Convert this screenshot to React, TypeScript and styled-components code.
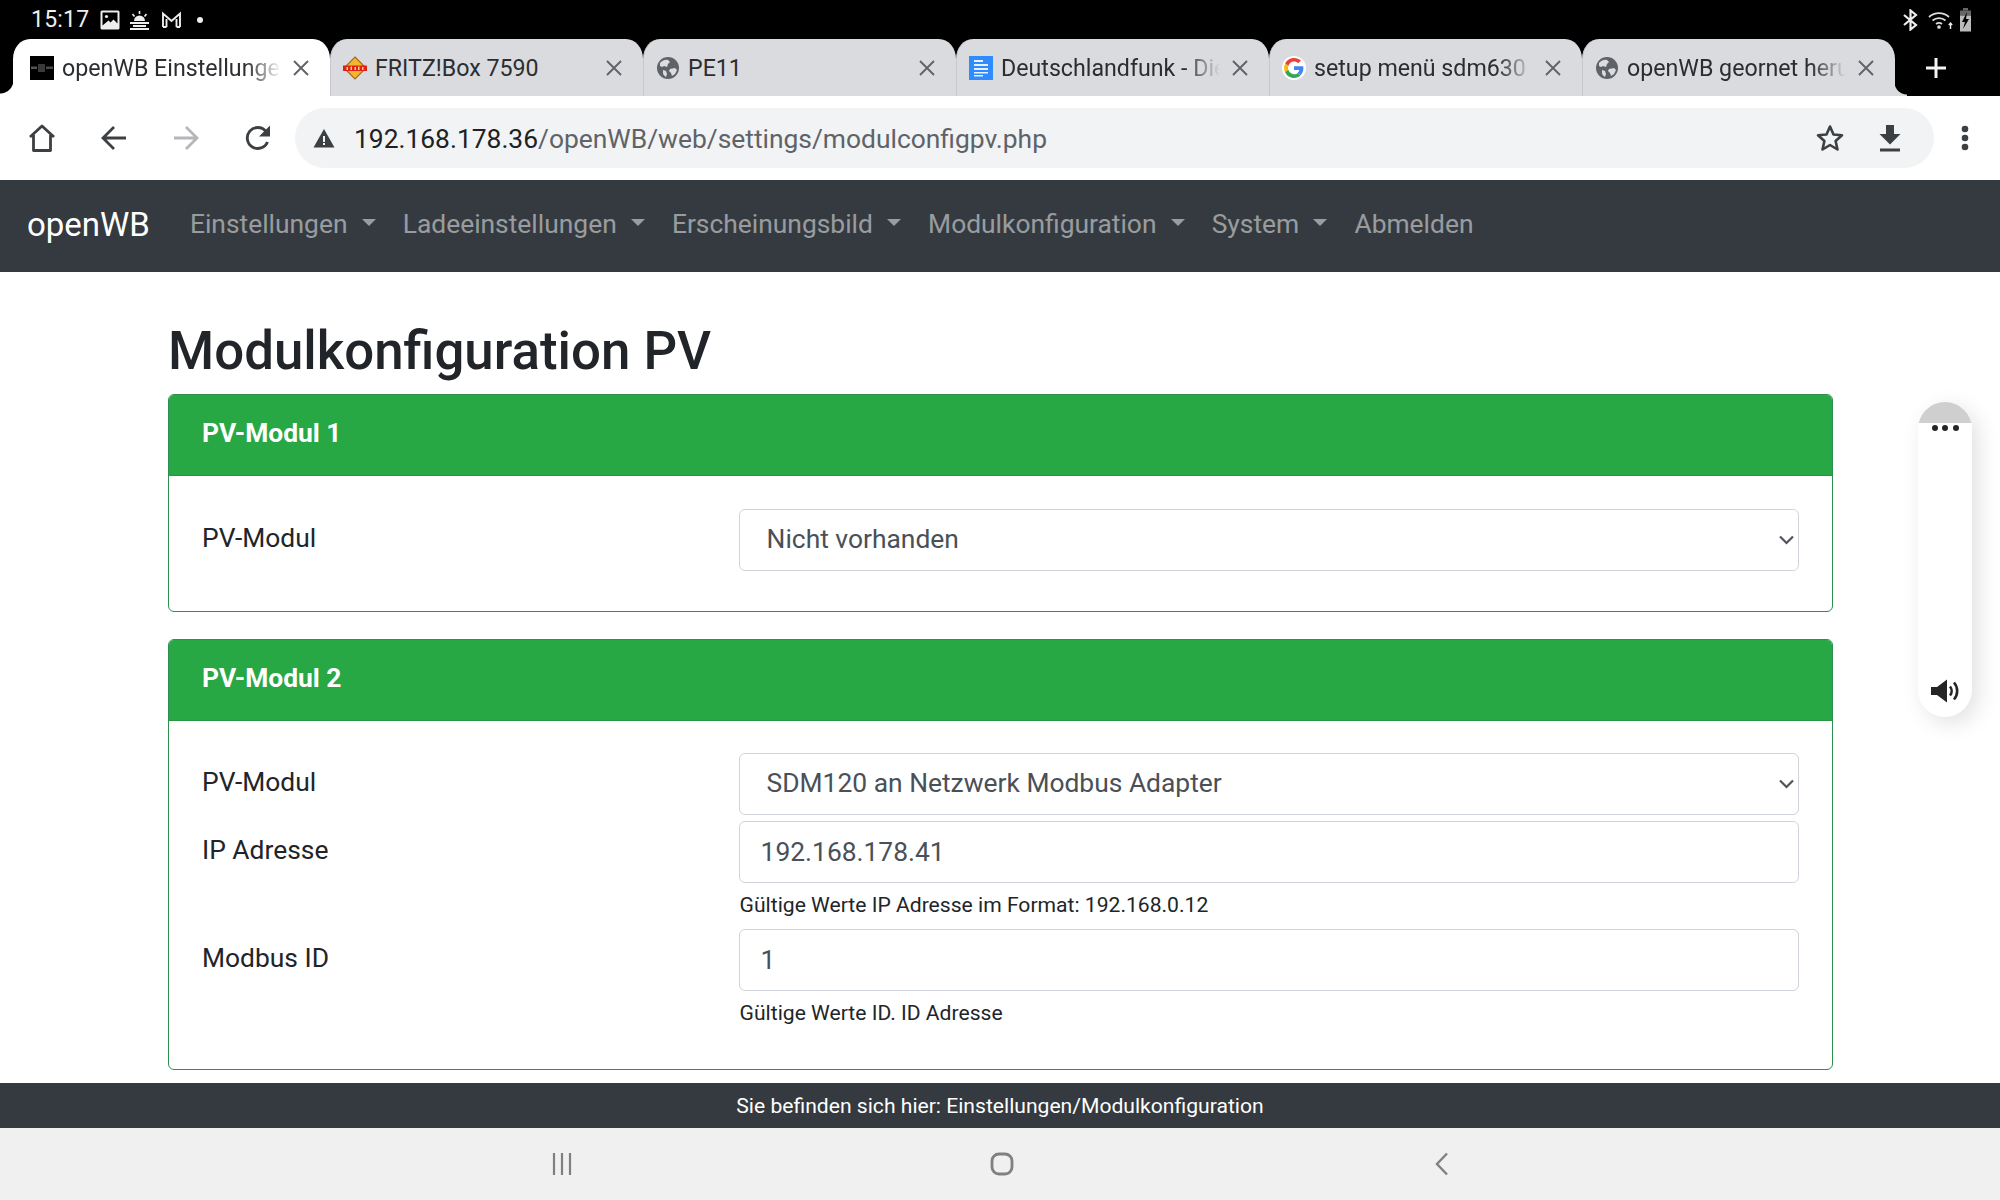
import React from "react";
import styled, { createGlobalStyle } from "styled-components";

const Global = createGlobalStyle`
  html, body { margin: 0; padding: 0; background: #fff; }
  body { font-family: Roboto, "Liberation Sans", sans-serif; color: #212529; }
  * { box-sizing: border-box; }
`;

const Page = styled.div`
  position: relative;
  width: 2000px;
  height: 1200px;
  overflow: hidden;
  display: flex;
  flex-direction: column;
  background: #fff;
`;

const StatusBar = styled.div`
  height: 39px;
  background: #000;
  color: #eee;
  display: flex;
  align-items: center;
  justify-content: space-between;
  padding: 0 28px 0 31px;
`;
const StatusGroup = styled.div<{ $gap: number }>`
  display: flex;
  align-items: center;
  gap: ${(p) => p.$gap}px;
`;
const Clock = styled.span`
  font-size: 23px;
  letter-spacing: 0.2px;
  margin-right: 2px;
`;

const TabStrip = styled.div`
  height: 57px;
  background: #000;
  display: flex;
  padding-left: 17px;
  align-items: stretch;
`;
const Tab = styled.div<{ $active?: boolean }>`
  position: relative;
  width: ${(p) => (p.$active ? 317 : 313)}px;
  height: 57px;
  margin-left: ${(p) => (p.$active ? -4 : 0)}px;
  display: flex;
  align-items: center;
  padding-left: ${(p) => (p.$active ? 17 : 12)}px;
  background: ${(p) => (p.$active ? "#fff" : "#dadbdf")};
  border-radius: 17px 17px 0 0 / 20px 20px 0 0;
  border-left: ${(p) => (p.$active ? "none" : "1px solid #c7c8cc")};
  &::before {
    content: ${(p) => (p.$active ? '""' : "none")};
    position: absolute;
    left: -13px;
    bottom: 0;
    width: 13px;
    height: 16px;
    background: radial-gradient(circle at 0 0, #000 13px, #fff 14px);
  }
`;
const LastFlare = styled.span`
  position: absolute;
  right: -12px;
  bottom: 0;
  width: 12px;
  height: 14px;
  background: radial-gradient(circle at 100% 0, #000 12px, #dadbdf 13px);
`;
const Favicon = styled.span`
  width: 24px;
  height: 24px;
  flex: none;
  display: flex;
  margin-right: 8px;
`;
const TabLabel = styled.span<{ $fade?: boolean }>`
  width: 219px;
  flex: none;
  font-size: 23.2px;
  color: #2c2d30;
  white-space: nowrap;
  overflow: hidden;
  ${(p) =>
    p.$fade
      ? `-webkit-mask-image: linear-gradient(to right, #000 84%, transparent 100%);
         mask-image: linear-gradient(to right, #000 84%, transparent 100%);`
      : ""}
`;
const CloseIcon = styled.svg`
  width: 18px;
  height: 18px;
  margin-left: 11px;
  stroke: #5f6368;
  stroke-width: 1.9;
  fill: none;
`;
const PlusButton = styled.div`
  width: 82px;
  display: flex;
  align-items: center;
  justify-content: center;
`;

const Toolbar = styled.div`
  height: 84px;
  display: flex;
  align-items: center;
  padding-left: 6px;
  background: #fff;
`;
const ToolButton = styled.div<{ $w?: number; $pr?: number }>`
  width: ${(p) => p.$w ?? 72}px;
  height: 60px;
  flex: none;
  display: flex;
  align-items: center;
  justify-content: center;
  padding-right: ${(p) => p.$pr ?? 0}px;
`;
const UrlPill = styled.div`
  flex: 1;
  height: 60px;
  margin-left: 1px;
  background: #f1f3f4;
  border-radius: 30px;
  display: flex;
  align-items: center;
  padding-left: 18px;
`;
const UrlText = styled.div`
  flex: 1;
  margin-left: 19px;
  padding-top: 2px;
  font-size: 26.4px;
  color: #5f6368;
  white-space: nowrap;
`;
const UrlHost = styled.span`
  color: #202124;
`;

const NavBar = styled.nav`
  height: 92px;
  background: #343a40;
  display: flex;
  align-items: center;
  padding: 0 25.6px 4px 27px;
`;
const Brand = styled.span`
  font-size: 33px;
  color: #fff;
  margin-right: 26.4px;
`;
const NavLink = styled.span<{ $caret?: boolean }>`
  font-size: 26.4px;
  color: rgba(255, 255, 255, 0.5);
  padding: 0 13.6px;
  white-space: nowrap;
  &::after {
    content: ${(p) => (p.$caret ? '""' : "none")};
    display: inline-block;
    margin-left: 14px;
    vertical-align: 0.255em;
    border-top: 7.5px solid;
    border-right: 7.5px solid transparent;
    border-left: 7.5px solid transparent;
  }
`;

const Main = styled.main`
  flex: 1;
  min-height: 0;
  overflow: hidden;
  padding: 0 167px 0 168px;
`;
const Title = styled.h1`
  margin: 0;
  height: 122px;
  padding-top: 45px;
  font-size: 52.8px;
  line-height: 68px;
  font-weight: 500;
  color: #212529;
`;
const Card = styled.section`
  border: 1.6px solid #2f8f4e;
  border-radius: 6px;
  overflow: hidden;
  margin-bottom: 27px;
`;
const CardHeader = styled.header`
  height: 81px;
  background: #28a745;
  border-bottom: 1.6px solid #24963e;
  color: #fff;
  font-weight: 700;
  font-size: 26.4px;
  display: flex;
  align-items: center;
  padding-left: 33px;
  padding-bottom: 4px;
`;
const CardBody = styled.div<{ $top: number; $bottom: number }>`
  padding: ${(p) => p.$top}px 33px ${(p) => p.$bottom}px;
`;
const FormRow = styled.div`
  display: grid;
  grid-template-columns: 520.6px 1fr;
  column-gap: 16px;
  margin-bottom: 6px;
`;
const Label = styled.label`
  font-size: 26.4px;
  line-height: 38px;
  padding-top: 10px;
  color: #212529;
`;
const SelectWrap = styled.div`
  position: relative;
`;
const Select = styled.select`
  display: block;
  width: 100%;
  height: 62px;
  appearance: none;
  -webkit-appearance: none;
  background: #fff;
  border: 1.6px solid #ced4da;
  border-radius: 6px;
  padding: 0 40px 2px 27px;
  font: 400 26.4px Roboto, sans-serif;
  color: #495057;
`;
const Chevron = styled.svg`
  position: absolute;
  right: 5px;
  top: 26px;
  width: 15px;
  height: 10px;
  fill: none;
  stroke: #50545a;
  stroke-width: 2.2;
`;
const Input = styled.input`
  display: block;
  width: 100%;
  height: 62px;
  background: #fff;
  border: 1.6px solid #ced4da;
  border-radius: 6px;
  padding: 0 21px;
  font: 400 26.4px Roboto, sans-serif;
  color: #495057;
  outline: none;
`;
const Help = styled.small`
  display: block;
  font-size: 21.12px;
  line-height: 33px;
  margin: 5px 0 2px 1px;
  color: #212529;
`;

const Footer = styled.footer`
  height: 45px;
  background: #343a40;
  color: #fff;
  font-size: 21.12px;
  display: flex;
  align-items: center;
  justify-content: center;
`;
const SystemNav = styled.div`
  height: 72px;
  background: #f0f0f0;
  display: grid;
  grid-template-columns: 440px 440px 440px;
  justify-content: center;
  justify-items: center;
  align-items: center;
  padding: 0 0 0 4px;
`;

const VolumePanel = styled.aside`
  position: absolute;
  left: 1918px;
  top: 402px;
  width: 54px;
  height: 315px;
  border-radius: 27px;
  background: #fff;
  overflow: hidden;
  box-shadow: 6px 6px 22px rgba(0, 0, 0, 0.12);
  display: flex;
  flex-direction: column;
  align-items: center;
  justify-content: space-between;
  padding-bottom: 14px;
`;
const VolumeHandle = styled.div`
  width: 100%;
  height: 29px;
  flex: none;
  background: linear-gradient(#cfcfcf 0 21px, #fff 21px);
  display: flex;
  align-items: flex-end;
  justify-content: center;
  gap: 4.5px;
`;
const VolumeDot = styled.span`
  width: 6px;
  height: 6px;
  border-radius: 50%;
  background: #252525;
`;

const Close = () => (
  <CloseIcon viewBox="0 0 18 18">
    <path d="M2 2 16 16M16 2 2 16" />
  </CloseIcon>
);

const Globe = () => (
  <svg width="24" height="24" viewBox="0 0 24 24">
    <circle cx="12" cy="12" r="11" fill="#5f6368" />
    <path d="M4 7c2-2 5-4 8-3l2 2-2 2-1 3-3-1-2 1-2-1zM14 13l5-1 2 2-2 4-3 2-1-3-2-2zM7 14l3 1 1 3-1 3c-2-1-3-3-3-4z" fill="#dcdde0" />
  </svg>
);

const WbIcon = () => (
  <svg width="24" height="24" viewBox="0 0 24 24">
    <rect width="24" height="24" fill="#000" />
    <rect x="1" y="10.500" width="6" height="2.500" fill="#555" />
    <rect x="8" y="8" width="7" height="8" fill="#3a3a3a" />
    <rect x="16" y="10.500" width="7" height="2.500" fill="#4a4a4a" />
  </svg>
);

const FritzIcon = () => (
  <svg width="24" height="24" viewBox="0 0 24 24">
    <path d="M12 1 23 12 12 23 1 12z" fill="#f2b630" stroke="#a9671a" strokeWidth="1.200" />
    <path d="M0 9.500h24v5.500H0z" fill="#e0201a" />
    <path d="M3.500 11h1.500v3H3.500zM7.500 10.500h1.500v3.500H7.500zM11.500 11h1.500v3h-1.500zM15 10.500h1.500v3.500H15zM19 11h1.500v3H19z" fill="#f8d76a" />
  </svg>
);

const DocsIcon = () => (
  <svg width="24" height="24" viewBox="0 0 24 24">
    <rect width="24" height="24" fill="#2f8cff" />
    <path d="M5 4h9v2H5zM5 8h14v2H5zM5 12h14v2H5zM5 16h14v1.500H5zM5 19h9v1.500H5z" fill="#e8f1ff" />
  </svg>
);

const GoogleIcon = () => (
  <svg width="24" height="24" viewBox="0 0 48 48">
    <circle cx="24" cy="24" r="24" fill="#fff" />
    <path fill="#EA4335" d="M24 11c3.400 0 6.300 1.200 8.600 3.300l5.300-5.300C34.500 5.800 29.600 4 24 4 16.300 4 9.600 8.400 6.300 14.900l6.300 4.900C14.100 14.800 18.600 11 24 11z" />
    <path fill="#4285F4" d="M42.800 24.400c0-1.400-.1-2.700-.4-4H24v7.500h10.600c-.5 2.500-1.900 4.600-4 6l6.100 4.800c3.600-3.300 6.100-8.200 6.100-14.300z" />
    <path fill="#FBBC05" d="M12.600 28.200c-.4-1.300-.6-2.700-.6-4.200s.2-2.900.6-4.200l-6.300-4.900C5 17.600 4.200 20.700 4.200 24s.8 6.400 2.100 9.100z" />
    <path fill="#34A853" d="M24 44c5.400 0 9.900-1.800 13.200-4.800l-6.100-4.800c-1.700 1.100-4 1.900-7.100 1.900-5.400 0-9.900-3.700-11.400-8.700l-6.300 4.900C9.600 39.600 16.300 44 24 44z" />
  </svg>
);

const tabs = [
  { icon: <WbIcon />, label: "openWB Einstellungen", active: true, fade: true },
  { icon: <FritzIcon />, label: "FRITZ!Box 7590" },
  { icon: <Globe />, label: "PE11" },
  { icon: <DocsIcon />, label: "Deutschlandfunk - Die", fade: true },
  { icon: <GoogleIcon />, label: "setup menü sdm630", fade: true },
  { icon: <Globe />, label: "openWB geornet heru", fade: true, last: true },
];

export default function App() {
  return (
    <Page>
      <Global />
      <StatusBar>
        <StatusGroup $gap={9}>
          <Clock>15:17</Clock>
          <svg width="20" height="20" viewBox="0 0 20 20">
            <rect x="0.5" y="0.5" width="19" height="19" rx="1.5" fill="#eee" />
            <path d="M2.500 2.500h15v11l-4-4-3 3-2-2-6 5z" fill="#000" />
            <circle cx="6.500" cy="6.500" r="1.600" fill="#eee" />
          </svg>
          <svg width="21" height="20" viewBox="0 0 21 20">
            <path d="M10.500 1v3M3.500 4l2 2.500M17.500 4l-2 2.500" stroke="#eee" strokeWidth="1.600" />
            <path d="M5 11a5.500 5.500 0 0 1 11 0z" fill="#eee" />
            <path d="M1 13h19M4 16h13M1 19h19" stroke="#eee" strokeWidth="1.800" />
          </svg>
          <svg width="21" height="18" viewBox="0 0 21 18" fill="none" stroke="#eee" strokeWidth="1.900" style={{ marginLeft: 2 }}>
            <path d="M2 16V2.500L10.500 10 19 2.500V16M5.500 16V8M15.500 16V8M2 16h3.500M15.500 16H19" />
          </svg>
          <svg width="16" height="8" viewBox="0 0 8 8" style={{ marginLeft: 1 }}>
            <circle cx="4" cy="4" r="3" fill="#eee" />
          </svg>
        </StatusGroup>
        <StatusGroup $gap={9}>
          <svg width="17" height="22" viewBox="0 0 17 22" fill="none" stroke="#eee" strokeWidth="2.200">
            <path d="M2 6 14 16 8.500 20.500V1.500L14 6 2 16" />
          </svg>
          <svg width="25" height="22" viewBox="0 0 25 22" fill="none" stroke="#ddd" strokeWidth="1.700">
            <path d="M1 8a15 15 0 0 1 20 0M4.500 11.500a10 10 0 0 1 13 0M8 15a5 5 0 0 1 6 0" />
            <circle cx="11" cy="18" r="1" fill="#ddd" />
            <path d="M22.500 20v-6M20.800 16l1.700-2 1.700 2" stroke="#eee" strokeWidth="1.400" />
          </svg>
          <svg width="13" height="24" viewBox="0 0 13 24" style={{ marginLeft: -3 }}>
            <rect x="4" y="0" width="5" height="2.500" fill="#666" />
            <rect x="1" y="2.500" width="11" height="5" fill="#666" />
            <rect x="1" y="7.500" width="11" height="16" fill="#bbb" />
            <path d="M8 4 3 14h3l-2 7 6-10H7z" fill="#000" />
          </svg>
        </StatusGroup>
      </StatusBar>

      <TabStrip>
        {tabs.map((t) => (
          <Tab key={t.label} $active={t.active}>
            <Favicon>{t.icon}</Favicon>
            <TabLabel $fade={t.fade}>{t.label}</TabLabel>
            <Close />
            {t.last && <LastFlare />}
          </Tab>
        ))}
        <PlusButton>
          <svg width="24" height="24" viewBox="0 0 24 24" stroke="#f4f4f4" strokeWidth="3">
            <path d="M12 2v20M2 12h20" />
          </svg>
        </PlusButton>
      </TabStrip>

      <Toolbar>
        <ToolButton>
          <svg width="30" height="30" viewBox="0 0 30 30" fill="none" stroke="#3c4043" strokeWidth="2.800" strokeLinejoin="round">
            <path d="M3 14 15 3l12 11M6.500 12v15.500h17V12" />
          </svg>
        </ToolButton>
        <ToolButton>
          <svg width="28" height="28" viewBox="0 0 28 28" fill="none" stroke="#3c4043" strokeWidth="2.800">
            <path d="M26 14H4M14 3 3 14l11 11" />
          </svg>
        </ToolButton>
        <ToolButton>
          <svg width="28" height="28" viewBox="0 0 28 28" fill="none" stroke="#b4b6b9" strokeWidth="2.800">
            <path d="M2 14h22M14 3l11 11-11 11" />
          </svg>
        </ToolButton>
        <ToolButton>
          <svg width="28" height="28" viewBox="0 0 28 28" fill="none" stroke="#3c4043" strokeWidth="2.900">
            <path d="M23.500 18a10.500 10.500 0 1 1-1.700-10.800" />
            <path d="M26 1.500v11H15z" fill="#3c4043" stroke="none" />
          </svg>
        </ToolButton>
        <UrlPill>
          <svg width="22" height="20" viewBox="0 0 22 20">
            <path d="M11 1 21.500 19.500H.5z" fill="#3c4043" />
            <path d="M10 8h2v6h-2zM10 15h2v2h-2z" fill="#f1f3f4" />
          </svg>
          <UrlText>
            <UrlHost>192.168.178.36</UrlHost>/openWB/web/settings/modulconfigpv.php
          </UrlText>
          <ToolButton $w={60}>
            <svg width="30" height="30" viewBox="0 0 30 30" fill="none" stroke="#3c4043" strokeWidth="2.600" strokeLinejoin="round">
              <path d="M15 3.500l3.500 8 8.500.8-6.400 5.700 1.900 8.500-7.500-4.500L7.500 26.500l1.900-8.500L3 12.300l8.500-.8z" />
            </svg>
          </ToolButton>
          <ToolButton $w={60}>
            <svg width="24" height="28" viewBox="0 0 24 28" fill="#3c4043">
              <path d="M8 1h8v9h6.500L12 20.500 1.500 10H8zM2 24.500h20V27.500H2z" />
            </svg>
          </ToolButton>
          <ToolButton $w={14} />
        </UrlPill>
        <ToolButton $w={66} $pr={4}>
          <svg width="8" height="26" viewBox="0 0 8 26" fill="#3c4043">
            <circle cx="4" cy="4" r="3.300" />
            <circle cx="4" cy="13" r="3.300" />
            <circle cx="4" cy="22" r="3.300" />
          </svg>
        </ToolButton>
      </Toolbar>

      <NavBar>
        <Brand>openWB</Brand>
        <NavLink $caret>Einstellungen</NavLink>
        <NavLink $caret>Ladeeinstellungen</NavLink>
        <NavLink $caret>Erscheinungsbild</NavLink>
        <NavLink $caret>Modulkonfiguration</NavLink>
        <NavLink $caret>System</NavLink>
        <NavLink>Abmelden</NavLink>
      </NavBar>

      <Main>
        <Title>Modulkonfiguration PV</Title>
        <Card>
          <CardHeader>PV-Modul 1</CardHeader>
          <CardBody $top={33} $bottom={34}>
            <FormRow>
              <Label>PV-Modul</Label>
              <SelectWrap>
                <Select defaultValue="none">
                  <option value="none">Nicht vorhanden</option>
                </Select>
                <Chevron viewBox="0 0 15 10">
                  <path d="M1 1.500 7.500 8 14 1.500" />
                </Chevron>
              </SelectWrap>
            </FormRow>
          </CardBody>
        </Card>
        <Card>
          <CardHeader>PV-Modul 2</CardHeader>
          <CardBody $top={32} $bottom={32}>
            <FormRow>
              <Label>PV-Modul</Label>
              <SelectWrap>
                <Select defaultValue="sdm">
                  <option value="sdm">SDM120 an Netzwerk Modbus Adapter</option>
                </Select>
                <Chevron viewBox="0 0 15 10">
                  <path d="M1 1.500 7.500 8 14 1.500" />
                </Chevron>
              </SelectWrap>
            </FormRow>
            <FormRow>
              <Label>IP Adresse</Label>
              <div>
                <Input defaultValue="192.168.178.41" />
                <Help>Gültige Werte IP Adresse im Format: 192.168.0.12</Help>
              </div>
            </FormRow>
            <FormRow>
              <Label>Modbus ID</Label>
              <div>
                <Input defaultValue="1" />
                <Help>Gültige Werte ID. ID Adresse</Help>
              </div>
            </FormRow>
          </CardBody>
        </Card>
      </Main>

      <Footer>Sie befinden sich hier: Einstellungen/Modulkonfiguration</Footer>
      <SystemNav>
        <svg width="22" height="24" viewBox="0 0 22 24" stroke="#808080" strokeWidth="2.200">
          <path d="M3 1v22M11 1v22M19 1v22" />
        </svg>
        <svg width="24" height="24" viewBox="0 0 24 24" fill="none" stroke="#808080" strokeWidth="2.800">
          <rect x="2" y="2" width="20" height="20" rx="7" />
        </svg>
        <svg width="16" height="24" viewBox="0 0 16 24" fill="none" stroke="#808080" strokeWidth="2.400">
          <path d="M13 1.500 3 12l10 10.500" />
        </svg>
      </SystemNav>

      <VolumePanel>
        <VolumeHandle>
          <VolumeDot />
          <VolumeDot />
          <VolumeDot />
        </VolumeHandle>
        <svg width="30" height="24" viewBox="0 0 30 24">
          <path d="M1 8h6l10-7.500v23L7 16H1z" fill="#252525" />
          <path d="M20 7.500a7 7 0 0 1 0 9M24 3.500a13 13 0 0 1 0 17" fill="none" stroke="#252525" strokeWidth="2.600" />
        </svg>
      </VolumePanel>
    </Page>
  );
}
